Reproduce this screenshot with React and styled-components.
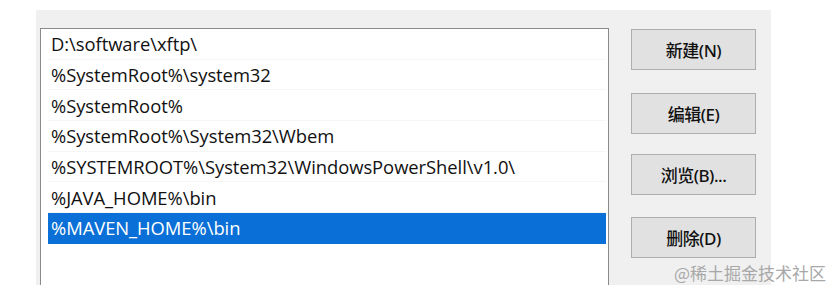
import React from "react";
import styled, { createGlobalStyle } from "styled-components";

const Global = createGlobalStyle`
  html, body { margin: 0; padding: 0; background: #ffffff; }
  body { width: 838px; height: 295px; overflow: hidden; position: relative; }
`;

const Dialog = styled.div`
  margin: 10px 0 0 36px;
  width: 735px;
  height: 275px;
  background: #f0f0f0;
  display: flex;
  align-items: flex-start;
  gap: 22px;
  padding: 18px 0 0 4px;
  box-sizing: border-box;
`;

const ListBox = styled.div`
  width: 569px;
  height: 257px;
  box-sizing: border-box;
  background: #ffffff;
  border: 1px solid #8a8a8a;
  border-bottom: none;
  padding: 0 2px 0 7px;
  display: flex;
  flex-direction: column;
`;

const Row = styled.div`
  height: 30.7px;
  flex: none;
  display: flex;
  align-items: center;
  padding-left: 3px;
  font-family: "Open Sans", "Noto Sans", sans-serif;
  font-size: 18.4px;
  letter-spacing: -0.05px;
  color: ${(p) => (p.$selected ? "#ffffff" : "#111111")};
  background: ${(p) => (p.$selected ? "#0a6fd6" : "transparent")};
  border-bottom: 1px solid ${(p) => (p.$selected ? "#0a6fd6" : "#f6f6f6")};
  box-sizing: border-box;
  white-space: nowrap;
`;

const Buttons = styled.div`
  display: flex;
  flex-direction: column;
  padding-top: 1px;
`;

const Button = styled.button`
  width: 125px;
  height: 41px;
  margin-bottom: ${(p) => p.$gap}px;
  background: #e1e1e1;
  border: 1px solid #adadad;
  border-radius: 0;
  font-family: "Noto Sans", "Noto Sans CJK SC", sans-serif;
  font-size: 17px;
  font-weight: 500;
  letter-spacing: -0.5px;
  color: #111;
  padding: 0;
  display: flex;
  align-items: center;
  justify-content: center;
`;

const Watermark = styled.div`
  position: absolute;
  left: 674px;
  top: 260px;
  font-family: "Noto Sans CJK SC", sans-serif;
  font-size: 17px;
  color: #a8a8a8;
  white-space: nowrap;
`;

const rows = [
  "D:\\software\\xftp\\",
  "%SystemRoot%\\system32",
  "%SystemRoot%",
  "%SystemRoot%\\System32\\Wbem",
  "%SYSTEMROOT%\\System32\\WindowsPowerShell\\v1.0\\",
  "%JAVA_HOME%\\bin",
  "%MAVEN_HOME%\\bin",
];

const buttons = [
  { label: "新建(N)", gap: 23 },
  { label: "编辑(E)", gap: 20 },
  { label: "浏览(B)...", gap: 22 },
  { label: "删除(D)", gap: 0 },
];

export default function App() {
  return (
    <>
      <Global />
      <Dialog>
        <ListBox>
          {rows.map((r, i) => (
            <Row key={i} $selected={i === 6}>
              {r}
            </Row>
          ))}
        </ListBox>
        <Buttons>
          {buttons.map((b) => (
            <Button key={b.label} $gap={b.gap}>
              {b.label}
            </Button>
          ))}
        </Buttons>
      </Dialog>
      <Watermark>@稀土掘金技术社区</Watermark>
    </>
  );
}
